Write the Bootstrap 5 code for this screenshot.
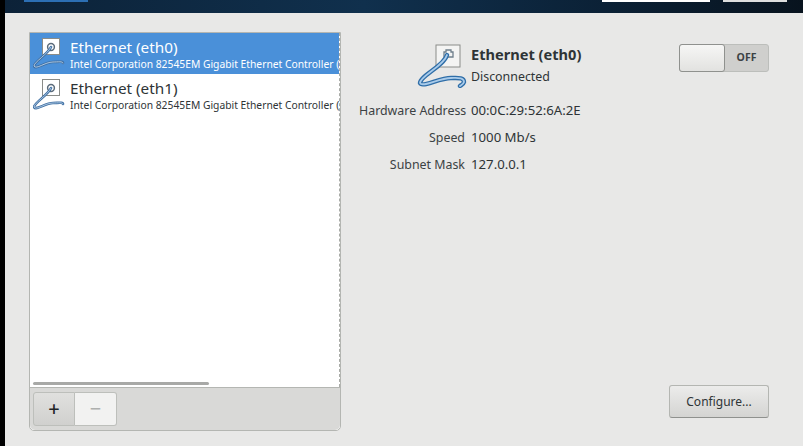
<!DOCTYPE html>
<html lang="en">
<head>
  <meta charset="UTF-8" />
  <title>Network and Host Name</title>
  <link href="https://cdn.jsdelivr.net/npm/bootstrap@5.3.0/dist/css/bootstrap.min.css" rel="stylesheet" />
  <style>
    html, body { height: 100%; overflow: hidden; }
    body { background: #e8e8e7; color: #2e3436; font-family: "Noto Sans", "Open Sans", sans-serif; font-size: 13px; }
    .edge-strip { width: 5px; background: #000; flex: none; }
    .top-strip { height: 13px; background: linear-gradient(90deg, #0c2238, #10304d 45%, #0b2136 75%, #08131e); flex: none; }
    .top-done { width: 64px; height: 2px; background: #2c6fb4; margin-left: 19px; }
    .top-field { width: 108px; height: 2px; background: #fff; margin-left: 514px; }
    .top-btn { width: 64px; height: 2px; background: #dedede; margin-left: 13px; }
    .page-area { padding: 19px 34px 15px 24px; }
    .dev-panel { width: 312px; border: 1px solid #b4b6b2; border-radius: 0 0 5px 5px; background: #fff; }
    .dev-list { border-right: 1px dashed #a9aba7; position: relative; }
    .dev-row { height: 41px; padding-left: 3px; }
    .dev-row.is-on { background: #4a90d9; color: #fff; }
    .dev-row svg { flex: none; margin-right: 1px; }
    .dev-name { font-size: 15.3px; line-height: 19px; padding-top: 2px; }
    .dev-sub { font-size: 10.3px; line-height: 13px; margin-top: 1px; white-space: nowrap; overflow: hidden; width: 270px; }
    .hscroll { position: absolute; left: 3px; bottom: 2px; width: 176px; height: 3px; background: #a8a9a7; border-radius: 2px; }
    .dev-tools { height: 43px; background: #d9d9d7; border-top: 1px solid #b4b6b2; border-radius: 0 0 5px 5px; padding: 4px 0 0 3px; }
    .tool-btn { width: 42px; height: 34px; border: 1px solid #bdbfbb; padding: 0; font-size: 20px; font-weight: 500; line-height: 30px; color: #1f2426; background: linear-gradient(#e0e0de, #d0d0ce); border-radius: 3px 0 0 3px; }
    .tool-btn.tool-off { width: 42px; background: #f2f2f1; color: #aeb0ae; border-left: 0; border-radius: 0 3px 3px 0; font-weight: 400; }
    .info-side { padding-left: 18px; }
    .info-grid { display: grid; grid-template-columns: 106px auto; column-gap: 6px; line-height: 27px; }
    .info-grid > .lbl { text-align: right; color: #3c4244; font-size: 12.4px; white-space: nowrap; }
    .info-grid > .val { font-size: 13.2px; }
    .info-head { padding-top: 12px; height: 65px; }
    .info-head svg { flex: none; margin-right: 4px; margin-left: 58px; }
    .info-name { font-weight: 700; font-size: 14.6px; line-height: 20px; }
    .info-state { font-size: 12.4px; line-height: 22px; margin-top: 2px; }
    .off-switch { width: 90px; height: 28px; background: #cfcfcd; border: 1px solid #bcbebb; border-radius: 3px; font-size: 10.5px; font-weight: 700; color: #3c4244; margin-top: 12px; flex: none; }
    .off-knob { width: 46px; height: 28px; margin: -1px 0 -1px -1px; background: linear-gradient(#f6f6f5, #e2e2e0); border: 1px solid #8f918e; border-radius: 3px; }
    .off-label { flex: 1; text-align: center; }
    .cfg-pad { padding-bottom: 13px; }
    .cfg-btn { width: 100px; height: 33px; padding: 0; font-size: 12px; color: #2e3436; background: linear-gradient(#ececeb, #d4d4d2); border: 1px solid #b4b6b2; border-bottom-color: #8f918e; border-radius: 3px; }
  </style>
</head>
<body class="d-flex">
  <svg width="0" height="0" class="position-absolute">
    <symbol id="net-icon" viewBox="0 0 50 44">
      <rect x="19" y="1" width="24" height="22" fill="#f4f4f3" stroke="#8a8c89" stroke-width="1"/>
      <path d="M27 13V8h2V6h5v2h2v5z" fill="none" stroke="#6f7f8c" stroke-width="1.3"/>
      <path d="M30 11 C27 22 3 32 3 39 C5 44 22 34 34 34 C40 34 47 33 47 38 C46 41 44 41 43 42" fill="none" stroke="#2f6ea8" stroke-width="4.4" stroke-linecap="round"/>
      <path d="M30 11 C27 22 3 32 3 39 C5 44 22 34 34 34 C40 34 47 33 47 38 C46 41 44 41 43 42" fill="none" stroke="#a9cbea" stroke-width="1.8" stroke-linecap="round"/>
    </symbol>
    <symbol id="net-small" viewBox="0 0 36 36">
      <rect x="9.5" y="2.5" width="17" height="16" fill="currentColor" stroke="#8a8c89" stroke-width="1"/>
      <circle cx="18" cy="11" r="3.4" fill="none" stroke="#5b6b7a" stroke-width="1.5"/>
      <path d="M18 11 C15 18 1 26 1 30 C3 34 12 26 20 26 C25 26 30 25 30 27" fill="none" stroke="#3f6fa3" stroke-width="2.6" stroke-linecap="round"/>
      <path d="M18 11 C15 18 1 26 1 30 C3 34 12 26 20 26 C25 26 30 25 30 27" fill="none" stroke="#b7cfe6" stroke-width=".9" stroke-linecap="round"/>
    </symbol>
  </svg>

  <div class="edge-strip"></div>
  <div class="flex-grow-1 d-flex flex-column">
    <div class="top-strip d-flex">
      <div class="top-done"></div>
      <div class="top-field"></div>
      <div class="top-btn"></div>
    </div>
    <div class="page-area flex-grow-1 d-flex">
      <div class="dev-panel d-flex flex-column flex-none">
        <div class="dev-list flex-grow-1">
          <div class="dev-row is-on d-flex align-items-center">
            <svg width="36" height="36" class="text-white"><use href="#net-small"/></svg>
            <div>
              <div class="dev-name">Ethernet (eth0)</div>
              <div class="dev-sub">Intel Corporation 82545EM Gigabit Ethernet Controller (</div>
            </div>
          </div>
          <div class="dev-row d-flex align-items-center">
            <svg width="36" height="36" class="text-white"><use href="#net-small"/></svg>
            <div>
              <div class="dev-name">Ethernet (eth1)</div>
              <div class="dev-sub">Intel Corporation 82545EM Gigabit Ethernet Controller (</div>
            </div>
          </div>
          <div class="hscroll"></div>
        </div>
        <div class="dev-tools d-flex align-items-start">
          <button class="tool-btn" type="button">+</button>
          <button class="tool-btn tool-off" type="button">−</button>
        </div>
      </div>
      <div class="info-side flex-grow-1 d-flex flex-column">
        <div class="d-flex justify-content-between">
          <div class="info-head d-flex">
            <svg width="50" height="44"><use href="#net-icon"/></svg>
            <div>
              <div class="info-name">Ethernet (eth0)</div>
              <div class="info-state">Disconnected</div>
            </div>
          </div>
          <div class="off-switch d-flex align-items-center">
            <div class="off-knob"></div>
            <div class="off-label">OFF</div>
          </div>
        </div>
        <div class="info-grid">
          <div class="lbl">Hardware Address</div><div class="val">00:0C:29:52:6A:2E</div>
          <div class="lbl">Speed</div><div class="val">1000 Mb/s</div>
          <div class="lbl">Subnet Mask</div><div class="val">127.0.0.1</div>
        </div>
        <div class="mt-auto d-flex justify-content-end cfg-pad">
          <button class="cfg-btn" type="button">Configure...</button>
        </div>
      </div>
    </div>
  </div>
</body>
</html>
